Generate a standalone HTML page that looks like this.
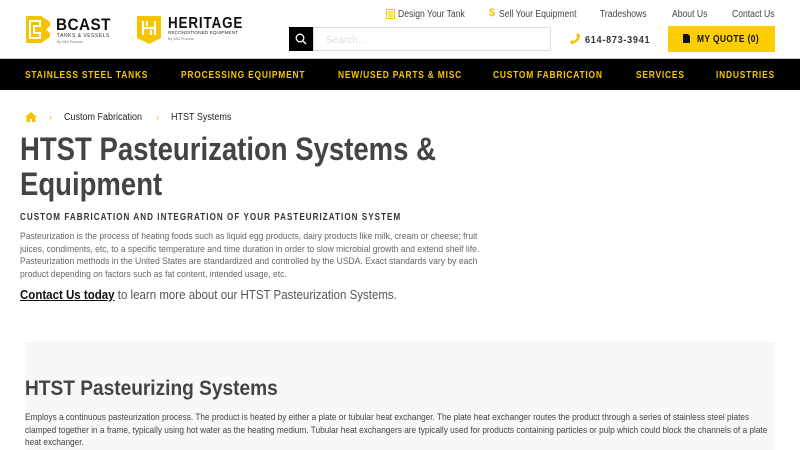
<!DOCTYPE html>
<html><head><meta charset="utf-8"><style>
*{margin:0;padding:0;box-sizing:border-box}
body{width:800px;height:450px;overflow:hidden;background:#fff;font-family:"Liberation Sans",sans-serif;color:#333;position:relative}
.abs{position:absolute;transform-origin:0 0;white-space:nowrap}
.top a{position:absolute;top:9px;font-size:10px;color:#444;white-space:nowrap;transform:scaleX(.86);transform-origin:0 0}
nav{position:absolute;top:58px;left:0;width:800px;height:32px;background:#000;border-top:1px solid #ccc}
nav span{position:absolute;top:10px;font-size:10.5px;font-weight:bold;color:#f6c800;letter-spacing:1px;white-space:nowrap;transform:scaleX(.8);transform-origin:0 0}
</style></head><body>
<svg class="abs" style="left:26px;top:16px" width="24" height="27" viewBox="0 0 24 27"><path d="M0 0h15l9 6v4l-4 3.5 4 3.5v4l-9 6H0z" fill="#f6c300"/><path d="M4 5h10v5H8v7h6v5H4z" fill="none" stroke="#fff" stroke-width="2"/></svg>
<div class="abs" style="left:56px;top:15px;font-size:17px;font-weight:bold;color:#111;letter-spacing:.5px;transform:scaleX(.9)">BCAST</div>
<div class="abs" style="left:57px;top:33px;font-size:5px;color:#333;letter-spacing:.5px">TANKS &amp; VESSELS</div>
<div class="abs" style="left:57px;top:40px;font-size:3.5px;color:#777">By VAD Process</div>
<svg class="abs" style="left:137px;top:16px" width="24" height="28" viewBox="0 0 24 28"><path d="M0 0h24v22l-12 6-12-6z" fill="#f6c300"/><path d="M6 5v14M18 5v14M6 12h12M10 5v5M14 14v5" stroke="#fff" stroke-width="2.2" fill="none"/></svg>
<div class="abs" style="left:168px;top:15px;font-size:16px;font-weight:bold;color:#111;letter-spacing:1px;transform:scaleX(.84)">HERITAGE</div>
<div class="abs" style="left:168px;top:31px;font-size:4.8px;color:#333">RECONDITIONED EQUIPMENT</div>
<div class="abs" style="left:168px;top:37px;font-size:3.5px;color:#777">By VAD Process</div>
<div class="top">
<svg class="abs" style="left:386px;top:9px" width="9" height="10"><rect x=".5" y=".5" width="8" height="9" fill="none" stroke="#f6c300"/><path d="M2 3h5M2 5h5M2 7h5" stroke="#f6c300"/></svg>
<a style="left:398px">Design Your Tank</a>
<span class="abs" style="left:489px;top:7px;font-size:11px;font-weight:bold;color:#f6c300">$</span>
<a style="left:499px">Sell Your Equipment</a>
<a style="left:600px">Tradeshows</a>
<a style="left:672px">About Us</a>
<a style="left:732px">Contact Us</a>
</div>
<div class="abs" style="left:289px;top:27px;width:24px;height:24px;background:#000"></div>
<svg class="abs" style="left:295px;top:33px" width="12" height="12"><circle cx="5" cy="5" r="3.8" stroke="#fff" stroke-width="1.3" fill="none"/><path d="M8 8l3 3" stroke="#fff" stroke-width="1.4"/></svg>
<div class="abs" style="left:313px;top:27px;width:238px;height:24px;border:1px solid #ddd;font-size:10px;color:#ddd;padding:7px 12px">Search...</div>
<svg class="abs" style="left:570px;top:33px" width="10" height="11" viewBox="0 0 10 11"><path d="M8 0l2 2.5c0 4-4 8.5-9 8.5L0 8.5l2.5-1.5 1.2 1.2C5.5 7 7 5 7.3 3.3L6 2z" fill="#f6c300"/></svg>
<div class="abs" style="left:585px;top:34px;font-size:10.5px;font-weight:bold;color:#333;letter-spacing:.8px;transform:scaleX(.87)">614-873-3941</div>
<div class="abs" style="left:668px;top:26px;width:107px;height:26px;background:#fccd05"></div>
<svg class="abs" style="left:683px;top:34px" width="7" height="9"><path d="M0 0h5l2 2v7H0z" fill="#111"/></svg>
<div class="abs" style="left:697px;top:33px;font-size:10.5px;font-weight:bold;color:#111;letter-spacing:.5px;transform:scaleX(.8)">MY QUOTE (0)</div>
<nav>
<span style="left:25px">STAINLESS STEEL TANKS</span>
<span style="left:181px">PROCESSING EQUIPMENT</span>
<span style="left:338px">NEW/USED PARTS &amp; MISC</span>
<span style="left:493px">CUSTOM FABRICATION</span>
<span style="left:636px">SERVICES</span>
<span style="left:716px">INDUSTRIES</span>
</nav>
<svg class="abs" style="left:25px;top:112px" width="12" height="10"><path d="M6 0L0 5h1.5v5h3.5V7h2v3h3.5V5H12z" fill="#f6c300"/></svg>
<span class="abs" style="left:49px;top:112px;font-size:9px;color:#f6c300">›</span>
<div class="abs" style="left:64px;top:112px;font-size:10px;color:#222;transform:scaleX(.9)">Custom Fabrication</div>
<span class="abs" style="left:156px;top:112px;font-size:9px;color:#f6c300">›</span>
<div class="abs" style="left:171px;top:112px;font-size:10px;color:#222;transform:scaleX(.9)">HTST Systems</div>
<div class="abs" style="left:20px;top:132px;font-size:32px;font-weight:bold;color:#444;line-height:35px;transform:scaleX(.86)">HTST Pasteurization Systems &amp;<br>Equipment</div>
<div class="abs" style="left:20px;top:212px;font-size:9.8px;font-weight:bold;color:#333;letter-spacing:1.3px;transform:scaleX(.82)">CUSTOM FABRICATION AND INTEGRATION OF YOUR PASTEURIZATION SYSTEM</div>
<div class="abs" style="left:20px;top:230px;width:516px;white-space:normal;font-size:9.3px;color:#666;line-height:12.5px;transform:scaleX(.92)">Pasteurization is the process of heating foods such as liquid egg products, dairy products like milk, cream or cheese; fruit juices, condiments, etc, to a specific temperature and time duration in order to slow microbial growth and extend shelf life. Pasteurization methods in the United States are standardized and controlled by the USDA. Exact standards vary by each product depending on factors such as fat content, intended usage, etc.</div>
<div class="abs" style="left:20px;top:288px;font-size:12.5px;color:#555;transform:scaleX(.92)"><b style="color:#111;text-decoration:underline">Contact Us today</b> to learn more about our HTST Pasteurization Systems.</div>
<div class="abs" style="left:25px;top:341px;width:750px;height:109px;background:#f8f8f8"></div>
<div class="abs" style="left:25px;top:377px;font-size:21px;font-weight:bold;color:#444;transform:scaleX(.91)">HTST Pasteurizing Systems</div>
<div class="abs" style="left:25px;top:411px;width:826px;white-space:normal;font-size:9.2px;color:#444;line-height:12.5px;transform:scaleX(.9)">Employs a continuous pasteurization process. The product is heated by either a plate or tubular heat exchanger. The plate heat exchanger routes the product through a series of stainless steel plates clamped together in a frame, typically using hot water as the heating medium. Tubular heat exchangers are typically used for products containing particles or pulp which could block the channels of a plate heat exchanger.</div>
</body></html>
